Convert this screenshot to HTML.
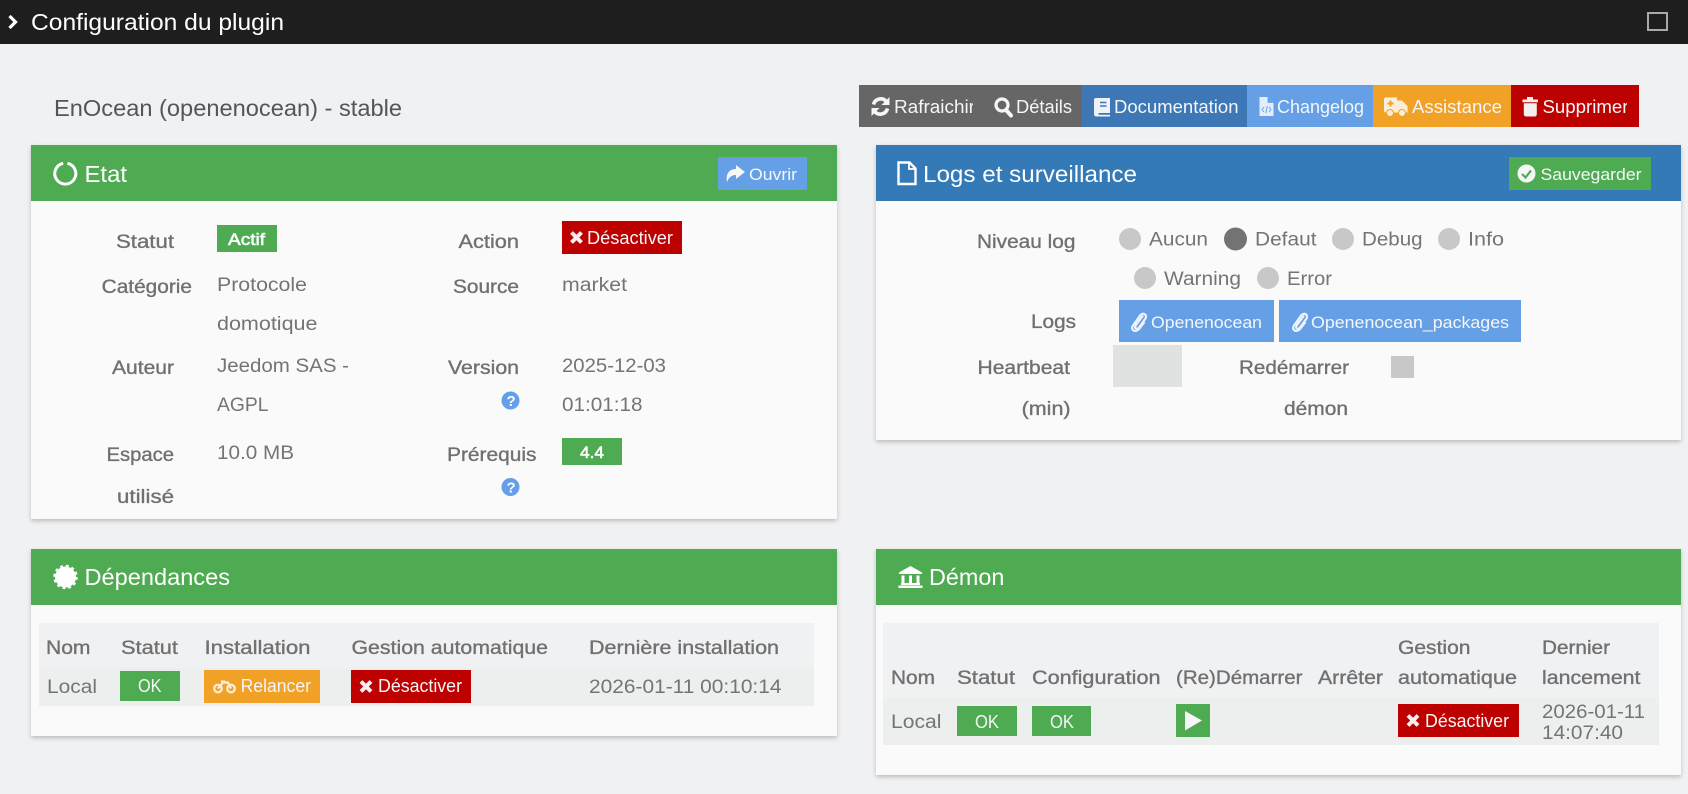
<!DOCTYPE html>
<html lang="fr"><head><meta charset="utf-8"><title>Configuration du plugin</title>
<style>
html,body{margin:0;padding:0;background:#f0f1f3;width:1688px;height:794px;overflow:hidden}
svg{display:block}
text{font-family:"Liberation Sans",sans-serif}
.w{fill:#f4f6f8;font-size:18px}
.s{fill:#f4f6f8;font-size:17px}
.h{fill:#fff;font-size:23px}
.l{fill:#707070;font-size:19px;stroke:#707070;stroke-width:.35px}
.v{fill:#747474;font-size:19px}
.b{fill:#fff;font-size:17px;stroke:#fff;stroke-width:.55px}
.p{filter:drop-shadow(0 2px 2px rgba(0,0,0,.22))}
</style></head><body>
<svg xmlns="http://www.w3.org/2000/svg" width="1688" height="794" viewBox="0 0 1688 794">
<rect width="1688" height="794" fill="#f0f1f3"/>
<!-- top bar -->
<rect width="1688" height="44" fill="#1e1e1e"/>
<path d="M9.500 16L15.500 22L9.500 28" fill="none" stroke="#fff" stroke-width="3.200"/>
<text x="31" y="30" class="h" textLength="253" lengthAdjust="spacingAndGlyphs">Configuration du plugin</text>
<rect x="1648" y="13" width="19" height="17" fill="none" stroke="#a9a9a9" stroke-width="2"/>
<!-- title -->
<text x="54" y="116" font-size="23" fill="#555" textLength="348" lengthAdjust="spacingAndGlyphs">EnOcean (openenocean) - stable</text>
<!-- action buttons -->
<rect x="859" y="85" width="223" height="42" fill="#666"/>
<rect x="1081.500" y="85" width="165.500" height="42" fill="#3d77b5"/>
<rect x="1247" y="85" width="126" height="42" fill="#659fe5"/>
<rect x="1373" y="85" width="138" height="42" fill="#f2a127"/>
<rect x="1511" y="85" width="128" height="42" fill="#bd0000"/>
<g fill="none" stroke="#f4f6f8" stroke-width="3.600">
<path d="M873.500 104.500A7.500 7.500 0 0 1 886 101"/><path d="M887.500 108.500A7.500 7.500 0 0 1 875 112"/>
</g>
<path d="M889.500 97V105H881.500ZM871.500 116V108H879.500Z" fill="#f4f6f8"/>
<circle cx="1002" cy="105" r="6" fill="none" stroke="#f4f6f8" stroke-width="3.200"/>
<path d="M1006 110L1011 115.500" stroke="#f4f6f8" stroke-width="4" stroke-linecap="round"/>
<path d="M1096 98H1110V113H1098.500V114.800H1110V116.500H1096.500Q1094 116.500 1094 114V100Q1094 98 1096 98Z" fill="#eef2f7"/>
<path d="M1100 102.500H1106.500M1100 106H1106.500" stroke="#3d77b5" stroke-width="1.500"/>
<path d="M1259.500 97H1268L1273.500 102.500V116H1259.500Z" fill="#e4eefb"/>
<path d="M1268 97V102.500H1273.500" fill="#659fe5" stroke="#659fe5" stroke-width=".8"/>
<path d="M1264 107L1262 109.500L1264 112M1269 107L1271 109.500L1269 112M1267.300 106L1265.800 113" fill="none" stroke="#659fe5" stroke-width=".9"/>
<path d="M1386 97.500H1397V100.500H1402L1407.500 106V112.500H1386Q1384 112.500 1384 110.500V99.500Q1384 97.500 1386 97.500Z" fill="#fbeed8"/>
<circle cx="1390" cy="113" r="3.500" fill="#fbeed8" stroke="#f2a127"/><circle cx="1402" cy="113" r="3.500" fill="#fbeed8" stroke="#f2a127"/>
<path d="M1390.500 100.500V106.500M1387.500 103.500H1393.500" stroke="#f2a127" stroke-width="2"/>
<path d="M1522.500 99.500H1527V97H1533V99.500H1538V102.200H1522.500ZM1523.800 103.200H1536.800V114Q1536.800 116.500 1534.500 116.500H1526Q1523.800 116.500 1523.800 114Z" fill="#f4f0f0"/>
<text x="894" y="113" class="w" textLength="81" lengthAdjust="spacingAndGlyphs">Rafraichir</text>
<rect x="973" y="95" width="7" height="24" fill="#666"/>
<text x="1016" y="113" class="w" textLength="56" lengthAdjust="spacingAndGlyphs">Détails</text>
<text x="1114" y="113" class="w" textLength="124.500" lengthAdjust="spacingAndGlyphs">Documentation</text>
<text x="1277" y="113" class="w" textLength="87" lengthAdjust="spacingAndGlyphs">Changelog</text>
<text x="1412" y="113" class="w" textLength="90" lengthAdjust="spacingAndGlyphs">Assistance</text>
<text x="1542.500" y="113" class="w" textLength="86" lengthAdjust="spacingAndGlyphs">Supprimer</text>
<rect x="1627" y="95" width="6" height="24" fill="#bd0000"/>
<!-- panels -->
<rect class="p" x="31" y="145" width="806" height="374" fill="#fafafa"/>
<rect x="31" y="145" width="806" height="56" fill="#4fab52"/>
<rect class="p" x="876" y="145" width="805" height="295" fill="#fafafa"/>
<rect x="876" y="145" width="805" height="56" fill="#337ab7"/>
<rect class="p" x="31" y="549" width="806" height="187" fill="#fafafa"/>
<rect x="31" y="549" width="806" height="56" fill="#4fab52"/>
<rect class="p" x="876" y="549" width="805" height="226" fill="#fafafa"/>
<rect x="876" y="549" width="805" height="56" fill="#4fab52"/>
<!-- Etat -->
<path d="M63.200 163.300A10.500 10.500 0 1 0 67.400 163.300" fill="none" stroke="#fff" stroke-width="3"/>
<text x="84.500" y="182" class="h" textLength="42.500" lengthAdjust="spacingAndGlyphs">Etat</text>
<rect x="718" y="157" width="89" height="33" fill="#659fe5"/>
<path d="M745 172L736 165V169C729 169 725.500 174 727 182C729 177 732 175 736 175V179Z" fill="#f4f6f8"/>
<text x="749" y="180" class="s" textLength="48" lengthAdjust="spacingAndGlyphs">Ouvrir</text>
<text x="116" y="248" class="l" textLength="58" lengthAdjust="spacingAndGlyphs">Statut</text>
<rect x="217" y="225" width="60" height="27" fill="#4fab52"/>
<text x="228" y="245" class="b" textLength="37" lengthAdjust="spacingAndGlyphs">Actif</text>
<text x="458.500" y="248" class="l" textLength="60.500" lengthAdjust="spacingAndGlyphs">Action</text>
<rect x="562" y="221" width="120" height="33" fill="#bd0000"/>
<path d="M571.500 232.500L581.500 242.500M581.500 232.500L571.500 242.500" stroke="#f6f0f0" stroke-width="4"/>
<text x="587" y="244" class="w" textLength="86" lengthAdjust="spacingAndGlyphs">Désactiver</text>
<text x="101.700" y="293" class="l" textLength="90.300" lengthAdjust="spacingAndGlyphs">Catégorie</text>
<text x="217" y="291" class="v" textLength="90" lengthAdjust="spacingAndGlyphs">Protocole</text>
<text x="453" y="293" class="l" textLength="66" lengthAdjust="spacingAndGlyphs">Source</text>
<text x="562" y="291" class="v" textLength="65" lengthAdjust="spacingAndGlyphs">market</text>
<text x="217" y="330" class="v" textLength="100.500" lengthAdjust="spacingAndGlyphs">domotique</text>
<text x="112" y="374" class="l" textLength="62" lengthAdjust="spacingAndGlyphs">Auteur</text>
<text x="217" y="372" class="v" textLength="132" lengthAdjust="spacingAndGlyphs">Jeedom SAS -</text>
<text x="217" y="411" class="v" textLength="51.500" lengthAdjust="spacingAndGlyphs">AGPL</text>
<text x="448" y="374" class="l" textLength="71" lengthAdjust="spacingAndGlyphs">Version</text>
<text x="562" y="372" class="v" textLength="104" lengthAdjust="spacingAndGlyphs">2025-12-03</text>
<text x="562" y="411" class="v" textLength="80.500" lengthAdjust="spacingAndGlyphs">01:01:18</text>
<circle cx="510.500" cy="400.500" r="9" fill="#659fe5"/>
<text x="506.500" y="406" font-size="15" font-weight="700" fill="#fff">?</text>
<text x="106.500" y="461" class="l" textLength="67.500" lengthAdjust="spacingAndGlyphs">Espace</text>
<text x="117" y="503" class="l" textLength="57" lengthAdjust="spacingAndGlyphs">utilisé</text>
<text x="217" y="459" class="v" textLength="77" lengthAdjust="spacingAndGlyphs">10.0 MB</text>
<text x="447" y="461" class="l" textLength="89.500" lengthAdjust="spacingAndGlyphs">Prérequis</text>
<rect x="562" y="438" width="60" height="27" fill="#4fab52"/>
<text x="580" y="458" class="b" textLength="24" lengthAdjust="spacingAndGlyphs">4.4</text>
<circle cx="510.500" cy="487" r="9" fill="#659fe5"/>
<text x="506.500" y="492.500" font-size="15" font-weight="700" fill="#fff">?</text>
<!-- Logs -->
<path d="M898.500 162.500H909.500L915.500 168.500V184H898.500Z" fill="none" stroke="#fff" stroke-width="2.400"/>
<path d="M909 162.500V169H915.500" fill="none" stroke="#fff" stroke-width="1.800"/>
<text x="923" y="182" class="h" textLength="214" lengthAdjust="spacingAndGlyphs">Logs et surveillance</text>
<rect x="1509" y="157" width="142" height="33" fill="#4fab52"/>
<circle cx="1526.500" cy="173.500" r="9" fill="#f4f6f8"/>
<path d="M1522 174L1525.500 177.500L1531 170.500" fill="none" stroke="#4fab52" stroke-width="2.200"/>
<text x="1540.500" y="180" class="s" textLength="101" lengthAdjust="spacingAndGlyphs">Sauvegarder</text>
<text x="977" y="248" class="l" textLength="98.400" lengthAdjust="spacingAndGlyphs">Niveau log</text>
<g fill="#c8c8c8">
<circle cx="1130" cy="239" r="11"/><circle cx="1343" cy="239" r="11"/><circle cx="1449" cy="239" r="11"/>
<circle cx="1145" cy="278" r="11"/><circle cx="1268" cy="278" r="11"/>
</g>
<circle cx="1235.500" cy="239" r="11.500" fill="#737373"/>
<text x="1149" y="245.500" class="v" textLength="59" lengthAdjust="spacingAndGlyphs">Aucun</text>
<text x="1255" y="245.500" class="v" textLength="61.500" lengthAdjust="spacingAndGlyphs">Defaut</text>
<text x="1362" y="245.500" class="v" textLength="60.600" lengthAdjust="spacingAndGlyphs">Debug</text>
<text x="1468" y="245.500" class="v" textLength="36" lengthAdjust="spacingAndGlyphs">Info</text>
<text x="1164" y="285" class="v" textLength="77" lengthAdjust="spacingAndGlyphs">Warning</text>
<text x="1287" y="285" class="v" textLength="45" lengthAdjust="spacingAndGlyphs">Error</text>
<text x="1031" y="328" class="l" textLength="45" lengthAdjust="spacingAndGlyphs">Logs</text>
<rect x="1119" y="300" width="155" height="42" fill="#659fe5"/>
<rect x="1279" y="300" width="242" height="42" fill="#659fe5"/>
<path d="M1143 315.500L1136 325C1133.500 328.500 1137 330 1139 327.500L1145.500 318.500C1147.500 315 1143.500 312 1140.500 315L1133 325.500C1130 330 1135.500 333 1139 329L1144.500 322" fill="none" stroke="#edf3fc" stroke-width="2.200"/>
<path transform="translate(161 0)" d="M1143 315.500L1136 325C1133.500 328.500 1137 330 1139 327.500L1145.500 318.500C1147.500 315 1143.500 312 1140.500 315L1133 325.500C1130 330 1135.500 333 1139 329L1144.500 322" fill="none" stroke="#edf3fc" stroke-width="2.200"/>
<text x="1151" y="328" class="s" textLength="111" lengthAdjust="spacingAndGlyphs">Openenocean</text>
<text x="1311" y="328" class="s" textLength="198" lengthAdjust="spacingAndGlyphs">Openenocean_packages</text>
<text x="977.500" y="374" class="l" textLength="92.500" lengthAdjust="spacingAndGlyphs">Heartbeat</text>
<text x="1021.600" y="415" class="l" textLength="49" lengthAdjust="spacingAndGlyphs">(min)</text>
<rect x="1113" y="345" width="69" height="42" fill="#e0e2e1"/>
<text x="1239" y="374" class="l" textLength="110" lengthAdjust="spacingAndGlyphs">Redémarrer</text>
<text x="1284" y="415" class="l" textLength="64" lengthAdjust="spacingAndGlyphs">démon</text>
<rect x="1391" y="356" width="23" height="22" fill="#c8c8c8"/>
<!-- Dependances -->
<circle cx="65.500" cy="577" r="10.500" fill="#fff"/>
<circle cx="65.500" cy="577" r="11" fill="none" stroke="#fff" stroke-width="2.500" stroke-dasharray="2.880 2.880"/>
<text x="84.500" y="585" class="h" textLength="145.500" lengthAdjust="spacingAndGlyphs">Dépendances</text>
<rect x="39" y="623" width="775" height="45" fill="#f0f1f3"/>
<rect x="39" y="668" width="775" height="38" fill="#edefee"/>
<text x="46" y="654" class="l" textLength="44.500" lengthAdjust="spacingAndGlyphs">Nom</text>
<text x="121" y="654" class="l" textLength="57" lengthAdjust="spacingAndGlyphs">Statut</text>
<text x="204.500" y="654" class="l" textLength="106" lengthAdjust="spacingAndGlyphs">Installation</text>
<text x="351.500" y="654" class="l" textLength="196.500" lengthAdjust="spacingAndGlyphs">Gestion automatique</text>
<text x="589" y="654" class="l" textLength="190" lengthAdjust="spacingAndGlyphs">Dernière installation</text>
<text x="47" y="693" class="v" textLength="50" lengthAdjust="spacingAndGlyphs">Local</text>
<rect x="120" y="671" width="60" height="30" fill="#4fab52"/>
<text x="138" y="692" class="w" textLength="23.500" lengthAdjust="spacingAndGlyphs">OK</text>
<rect x="204" y="670" width="116" height="33" fill="#f2a127"/>
<g fill="none" stroke="#fbeed8" stroke-width="2.200"><circle cx="218" cy="688.500" r="3.800"/><circle cx="231" cy="688.500" r="3.800"/><path d="M218 688.500L223 682.500H228L231 688.500M221 681.500H225"/></g>
<text x="240.600" y="692" class="w" textLength="70.400" lengthAdjust="spacingAndGlyphs">Relancer</text>
<rect x="351" y="670" width="120" height="33" fill="#bd0000"/>
<path d="M361 681.500L371 691.500M371 681.500L361 691.500" stroke="#f6f0f0" stroke-width="4"/>
<text x="378" y="692" class="w" textLength="84" lengthAdjust="spacingAndGlyphs">Désactiver</text>
<text x="589" y="693" class="v" textLength="192.500" lengthAdjust="spacingAndGlyphs">2026-01-11 00:10:14</text>
<!-- Demon -->
<path d="M910.500 566L922 572.500V574H899V572.500Z" fill="#fff"/>
<path d="M903 575.500V583M910.500 575.500V583M918 575.500V583" stroke="#fff" stroke-width="3"/>
<rect x="901" y="583" width="19" height="2" fill="#fff"/><rect x="898.500" y="585.500" width="24" height="2.500" fill="#fff"/>
<text x="929" y="585" class="h" textLength="75.400" lengthAdjust="spacingAndGlyphs">Démon</text>
<rect x="883" y="623" width="776" height="75" fill="#f0f1f3"/>
<rect x="883" y="698" width="776" height="47" fill="#edefee"/>
<text x="891" y="684" class="l" textLength="44" lengthAdjust="spacingAndGlyphs">Nom</text>
<text x="957" y="684" class="l" textLength="58" lengthAdjust="spacingAndGlyphs">Statut</text>
<text x="1032" y="684" class="l" textLength="128.500" lengthAdjust="spacingAndGlyphs">Configuration</text>
<text x="1176" y="684" class="l" textLength="126.500" lengthAdjust="spacingAndGlyphs">(Re)Démarrer</text>
<text x="1318" y="684" class="l" textLength="65" lengthAdjust="spacingAndGlyphs">Arrêter</text>
<text x="1398" y="654" class="l" textLength="72.500" lengthAdjust="spacingAndGlyphs">Gestion</text>
<text x="1398" y="684" class="l" textLength="119" lengthAdjust="spacingAndGlyphs">automatique</text>
<text x="1542" y="654" class="l" textLength="68" lengthAdjust="spacingAndGlyphs">Dernier</text>
<text x="1542" y="684" class="l" textLength="98.500" lengthAdjust="spacingAndGlyphs">lancement</text>
<text x="891" y="728" class="v" textLength="50.400" lengthAdjust="spacingAndGlyphs">Local</text>
<rect x="957" y="706" width="60" height="30" fill="#4fab52"/>
<text x="975" y="728" class="w" textLength="24" lengthAdjust="spacingAndGlyphs">OK</text>
<rect x="1032" y="706" width="59" height="30" fill="#4fab52"/>
<text x="1050" y="728" class="w" textLength="24" lengthAdjust="spacingAndGlyphs">OK</text>
<rect x="1176" y="704" width="34" height="33" fill="#4fab52"/>
<path d="M1185 711L1202 720.500L1185 730.500Z" fill="#f4f6f8"/>
<rect x="1398" y="704" width="121" height="33" fill="#bd0000"/>
<path d="M1408 715.500L1418 725.500M1418 715.500L1408 725.500" stroke="#f6f0f0" stroke-width="4"/>
<text x="1425" y="727" class="w" textLength="84" lengthAdjust="spacingAndGlyphs">Désactiver</text>
<text x="1542" y="718" class="v" textLength="103" lengthAdjust="spacingAndGlyphs">2026-01-11</text>
<text x="1542" y="739" class="v" textLength="81" lengthAdjust="spacingAndGlyphs">14:07:40</text>
</svg>
</body></html>
